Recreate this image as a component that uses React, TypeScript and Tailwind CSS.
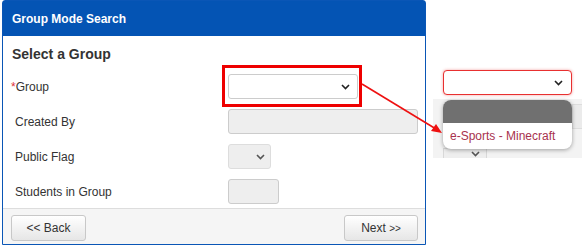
import React from "react";

const FONT = { fontFamily: '"Liberation Sans", Arial, sans-serif' };

function Chevron({ className = "" }: { className?: string }) {
  return (
    <svg width="9" height="6" viewBox="0 0 9 6" className={className}>
      <polyline points="1,1 4.5,4.5 8,1" fill="none" stroke="currentColor" strokeWidth="1.6" />
    </svg>
  );
}

function Row({ label, required, children }: { label: string; required?: boolean; children: React.ReactNode }) {
  return (
    <div className="flex h-[25px] items-center">
      <div className="w-[225px] pl-[12px] text-[12px] text-[#333]">
        {required && <span className="ml-[-4px] text-[#e0303a]">*</span>}
        {label}
      </div>
      {children}
    </div>
  );
}

export default function App() {
  return (
    <div className="relative flex h-[250px] w-[585px] bg-white" style={FONT}>
      {/* main panel */}
      <div className="ml-[2px] flex h-[245px] w-[424px] flex-col rounded-t-[3px] border border-[#0a56b6]">
        <div className="flex h-[35px] items-center bg-[#0454b4] pl-[9px] text-[12px] font-bold text-white">
          Group Mode Search
        </div>
        <div className="flex flex-1 flex-col">
          <div className="pl-[9px] pt-[10px] text-[14px] font-bold leading-[17px] text-[#333]">Select a Group</div>
          <div className="mt-[11px] flex flex-col gap-[10px]">
            <Row label="Group" required>
              <div className="relative">
                <div className="flex h-[25px] w-[130px] items-center justify-end rounded-[3px] border border-[#ccc] bg-white pr-[7px] text-[#222]">
                  <Chevron />
                </div>
                <div className="absolute left-[-6px] top-[-9px] h-[42px] w-[140px] border-[3px] border-[#ee0000]" />
              </div>
            </Row>
            <Row label="Created By">
              <div className="h-[25px] w-[190px] rounded-[3px] border border-[#ccc] bg-[#eee]" />
            </Row>
            <Row label="Public Flag">
              <div className="flex h-[25px] w-[43px] items-center justify-end rounded-[3px] border border-[#ddd] bg-[#eee] pr-[5px] text-[#555]">
                <Chevron />
              </div>
            </Row>
            <Row label="Students in Group">
              <div className="h-[25px] w-[51px] rounded-[3px] border border-[#ccc] bg-[#eee]" />
            </Row>
          </div>
        </div>
        <div className="flex h-[36px] items-start justify-between border-t border-[#ddd] bg-[#f5f5f5] pl-[8px] pr-[7px] pt-[6px]">
          <button className="h-[26px] w-[75px] rounded-[3px] border border-[#c8c8c8] bg-gradient-to-b from-white to-[#e6e6e6] text-[12px] text-[#333]">
            &lt;&lt; Back
          </button>
          <button className="h-[26px] w-[74px] rounded-[3px] border border-[#c8c8c8] bg-gradient-to-b from-white to-[#e6e6e6] text-[12px] text-[#333]">
            Next <span className="text-[10px]">&gt;&gt;</span>
          </button>
        </div>
      </div>

      {/* zoomed-in dropdown */}
      <div className="ml-[7px] flex w-[149px] flex-col pt-[70px]">
        <div className="ml-[10px] flex h-[25px] w-[129px] items-center justify-end rounded-[4px] border border-[#e83030] bg-white pr-[8px] text-[#222] shadow-[0_0_3px_rgba(230,40,40,0.45)]">
          <Chevron />
        </div>
        <div className="relative mt-[4px] h-[59px] bg-[#f3f3f3]">
          <div className="ml-[10px] mt-[5px] flex h-[25px] border-t border-[#ddd]">
            <div className="w-[129px]" />
            <div className="flex-1 border-b border-l border-[#ddd] bg-[#ebebeb]" />
          </div>
          <div className="ml-[10px] mt-[19px] flex h-[10px] w-[44px] items-start justify-end border-x border-t border-[#d8d8d8] bg-[#eee] pr-[6px] pt-[2px] text-[#555]">
            <Chevron />
          </div>
          <div className="absolute left-[10px] top-[1px] h-[49px] w-[129px] overflow-hidden rounded-[8px] bg-white shadow-[0_1px_4px_rgba(0,0,0,0.35)]">
            <div className="h-[23px] bg-[#707070]" />
            <div className="pl-[7px] pt-[5px] text-[12px] leading-[16px] text-[#a8324e]">e-Sports - Minecraft</div>
          </div>
        </div>
      </div>

      {/* arrow */}
      <svg className="pointer-events-none absolute left-0 top-0" width="585" height="250">
        <line x1="362" y1="84" x2="436" y2="129" stroke="#ee1111" strokeWidth="1.6" />
        <polygon points="442,133 431,131 436,124" fill="#ee1111" />
      </svg>
    </div>
  );
}
